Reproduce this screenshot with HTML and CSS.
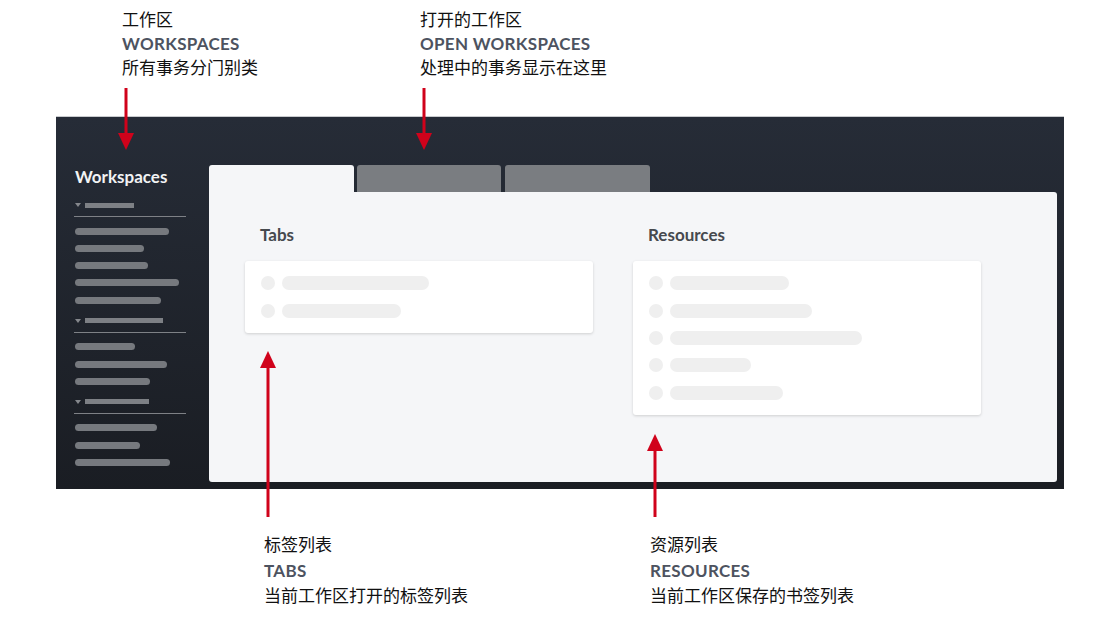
FILE: index.html
```html
<!DOCTYPE html>
<html lang="zh">
<head>
    <meta charset="UTF-8">
    <title>Workspaces</title>
    <link rel="stylesheet" href="styles.css">
</head>
<body>
<div class="notes notes-top">
    <div class="note note-ws">
        <p>工作区</p>
        <p class="note-en">WORKSPACES</p>
        <p>所有事务分门别类</p>
        <svg class="arrow arrow-down" width="16" height="62" viewBox="0 0 16 62">
            <line x1="8" y1="0" x2="8" y2="46" stroke="#d0021b" stroke-width="3"/>
            <polygon points="0,45 16,45 8,62" fill="#d0021b"/>
        </svg>
    </div>
    <div class="note">
        <p>打开的工作区</p>
        <p class="note-en">OPEN WORKSPACES</p>
        <p>处理中的事务显示在这里</p>
        <svg class="arrow arrow-down" width="16" height="62" viewBox="0 0 16 62">
            <line x1="8" y1="0" x2="8" y2="46" stroke="#d0021b" stroke-width="3"/>
            <polygon points="0,45 16,45 8,62" fill="#d0021b"/>
        </svg>
    </div>
</div>

<div class="app">
    <div class="sidebar">
        <div class="side-title">Workspaces</div>

        <div class="group">
            <div class="group-head"><span class="caret"></span><span class="head-bar w49"></span></div>
            <span class="side-bar w94"></span>
            <span class="side-bar w69"></span>
            <span class="side-bar w73"></span>
            <span class="side-bar w104"></span>
            <span class="side-bar w86"></span>
        </div>
        <div class="group">
            <div class="group-head"><span class="caret"></span><span class="head-bar w78"></span></div>
            <span class="side-bar w60"></span>
            <span class="side-bar w92"></span>
            <span class="side-bar w75"></span>
        </div>
        <div class="group">
            <div class="group-head"><span class="caret"></span><span class="head-bar w64"></span></div>
            <span class="side-bar w82"></span>
            <span class="side-bar w65"></span>
            <span class="side-bar w95"></span>
        </div>
    </div>

    <div class="main">
        <div class="tabs">
            <div class="tab active"></div>
            <div class="tab"></div>
            <div class="tab tab-last"></div>
        </div>
        <div class="content">
            <div class="col">
                <h3>Tabs</h3>
                <div class="card">
                    <div class="row"><span class="dot"></span><span class="line w147"></span></div>
                    <div class="row"><span class="dot"></span><span class="line w119"></span></div>
                </div>
            </div>
            <div class="col">
                <h3>Resources</h3>
                <div class="card">
                    <div class="row"><span class="dot"></span><span class="line w119"></span></div>
                    <div class="row"><span class="dot"></span><span class="line w142"></span></div>
                    <div class="row"><span class="dot"></span><span class="line w192"></span></div>
                    <div class="row"><span class="dot"></span><span class="line w81"></span></div>
                    <div class="row"><span class="dot"></span><span class="line w113"></span></div>
                </div>
            </div>
        </div>
    </div>
</div>

<div class="notes notes-bottom">
    <div class="note note-tabs">
        <svg class="arrow arrow-up arrow-long" width="16" height="166" viewBox="0 0 16 166">
            <polygon points="8,0 0,17 16,17" fill="#d0021b"/>
            <line x1="8" y1="16" x2="8" y2="166" stroke="#d0021b" stroke-width="3"/>
        </svg>
        <p>标签列表</p>
        <p class="note-en">TABS</p>
        <p>当前工作区打开的标签列表</p>
    </div>
    <div class="note note-res">
        <svg class="arrow arrow-up" width="16" height="83" viewBox="0 0 16 83">
            <polygon points="8,0 0,17 16,17" fill="#d0021b"/>
            <line x1="8" y1="16" x2="8" y2="83" stroke="#d0021b" stroke-width="3"/>
        </svg>
        <p>资源列表</p>
        <p class="note-en">RESOURCES</p>
        <p>当前工作区保存的书签列表</p>
    </div>
</div>
</body>
</html>
```

FILE: styles.css
```css
*{
    margin: 0;
    padding: 0;
    box-sizing: border-box;
}
body{
    width: 1120px;
    height: 631px;
    overflow: hidden;
    background: #fff;
    font-family: Lato, "Noto Sans CJK SC", sans-serif;
    color: #111;
}

/* annotations */
.notes{
    display: flex;
    align-items: flex-start;
}
.notes-top{
    height: 116px;
    padding: 8px 0 0 122px;
}
.notes-bottom{
    padding: 43px 0 0 264px;
}
.note{
    position: relative;
    font-size: 17px;
    line-height: 24px;
}
.notes-bottom .note{
    line-height: 25.7px;
}
.note-ws{
    width: 298px;
}
.note-tabs{
    width: 386px;
}
.note-en{
    font-weight: 700;
    letter-spacing: 0.3px;
    color: #4d5360;
}
.arrow{
    position: absolute;
    left: -4px;
    display: block;
}
.arrow-down{
    top: calc(100% + 8px);
}
.arrow-up{
    bottom: calc(100% + 15px);
}
.note-res .arrow{
    left: -3px;
}

/* app window */
.app{
    display: flex;
    width: 1008px;
    height: 373px;
    margin-left: 56px;
    background: linear-gradient(#262c37, #1a1d23);
    border-top: 1px solid #c9cbce;
}
.sidebar{
    width: 153px;
    padding: 50px 0 0 18px;
}
.side-title{
    color: #f2f3f4;
    font-size: 17px;
    font-weight: 700;
    line-height: 20px;
    margin: 0 0 13px 1px;
}
.group{
    width: 112px;
    display: flex;
    flex-direction: column;
    align-items: flex-start;
}
.group + .group{
    margin-top: 12px;
}
.group-head{
    width: 100%;
    height: 17px;
    display: flex;
    align-items: center;
    padding: 0 0 6px 1px;
    border-bottom: 1px solid #7e8186;
    margin-bottom: 10.5px;
}
.caret{
    width: 0;
    height: 0;
    border-left: 3px solid transparent;
    border-right: 3px solid transparent;
    border-top: 4px solid #85888d;
    margin-right: 4px;
}
.head-bar{
    height: 5px;
    background: #7d8085;
}
.side-bar{
    height: 7px;
    margin-left: 1px;
    border-radius: 4px;
    background: #76797e;
}
.side-bar + .side-bar{
    margin-top: 10.33px;
}

.main{
    flex: 1;
    display: flex;
    flex-direction: column;
    padding: 48px 7px 7px 0;
}
.tabs{
    display: flex;
    height: 27px;
}
.tab{
    width: 144px;
    margin-left: 3px;
    border-radius: 3px 3px 0 0;
    background: #7a7d81;
}
.tab.active{
    width: 145px;
    margin-left: 0;
    background: #f5f6f8;
}
.tab-last{
    width: 145px;
    margin-left: 4px;
}
.content{
    flex: 1;
    display: flex;
    gap: 40px;
    padding: 33px 0 0 36px;
    background: #f5f6f8;
    border-radius: 0 3px 3px 3px;
}
.col{
    width: 348px;
}
.col h3{
    font-size: 17px;
    font-weight: 700;
    line-height: 20px;
    color: #46494e;
    margin: 0 0 16px 15px;
}
.card{
    display: flex;
    flex-direction: column;
    gap: 13.4px;
    padding: 15.3px 16px;
    background: #fff;
    border-radius: 3px;
    box-shadow: 0 1px 3px rgba(0, 0, 0, 0.16);
}
.row{
    display: flex;
    align-items: center;
    gap: 7px;
    height: 14px;
}
.dot{
    width: 14px;
    height: 14px;
    border-radius: 50%;
    background: #efefef;
}
.line{
    height: 14px;
    border-radius: 7px;
    background: #efefef;
}

/* widths */
.w49{ width: 49px; }
.w60{ width: 60px; }
.w64{ width: 64px; }
.w65{ width: 65px; }
.w69{ width: 69px; }
.w73{ width: 73px; }
.w75{ width: 75px; }
.w78{ width: 78px; }
.w81{ width: 81px; }
.w82{ width: 82px; }
.w86{ width: 86px; }
.w92{ width: 92px; }
.w94{ width: 94px; }
.w95{ width: 95px; }
.w104{ width: 104px; }
.w113{ width: 113px; }
.w119{ width: 119px; }
.w142{ width: 142px; }
.w147{ width: 147px; }
.w192{ width: 192px; }
```
